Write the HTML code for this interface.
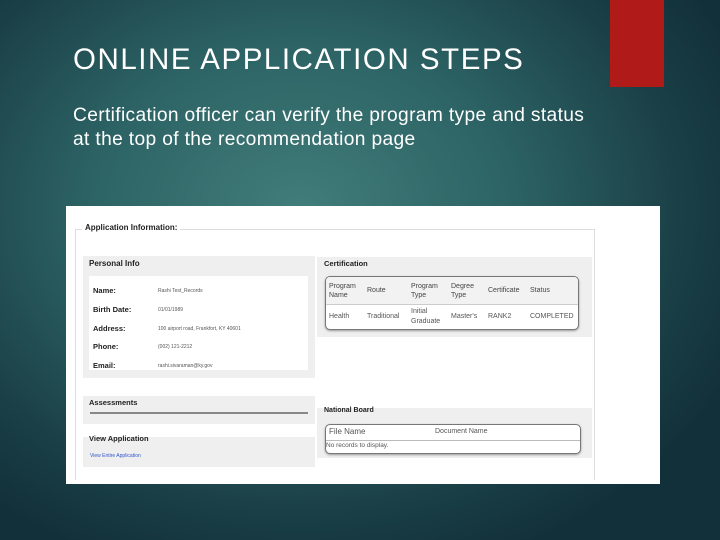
<!DOCTYPE html>
<html><head><style>
body{margin:0;width:720px;height:540px;overflow:hidden;position:relative;font-family:"Liberation Sans",sans-serif;
background:radial-gradient(ellipse 480px 380px at 300px 210px,#417d7a 0%,#2c6264 45%,#1a3f46 80%,#12303a 100%);}
.red{position:absolute;left:610px;top:0;width:54px;height:87px;background:#b01a19;}
h1{position:absolute;left:73px;top:43px;margin:0;font-weight:normal;font-size:29.5px;letter-spacing:1.55px;color:#fff;white-space:nowrap}
.sub{position:absolute;left:73px;top:104px;font-size:19.2px;letter-spacing:0.35px;line-height:24px;color:#fff;white-space:nowrap}
.shot{position:absolute;left:66px;top:206px;width:594px;height:278px;background:#fff;font-size:7px;color:#333}
.a{position:absolute}
.fs{border:1px solid #ddd;}
.p{background:#efefef}
b{font-weight:bold;color:#222}
.tb{background:#fff;border:1px solid #777;border-radius:5px;box-shadow:0 1px 2px #999}
</style></head><body>
<div class="red"></div>
<h1>ONLINE APPLICATION STEPS</h1>
<div class="sub">Certification officer can verify the program type and status<br>at the top of the recommendation page</div>
<div class="shot">
 <div class="a fs" style="left:9px;top:23px;width:518px;height:250px;border-bottom:none"></div>
 <div class="a" style="left:16px;top:17px;background:#fff;padding:0 3px;font-size:8px"><b>Application Information:</b></div>
 <div class="a p" style="left:17px;top:50px;width:232px;height:122px"></div>
 <div class="a" style="left:23px;top:53px;font-size:8px"><b>Personal Info</b></div>
 <div class="a" style="left:23px;top:70px;width:219px;height:94px;background:#fff"></div>
 <div class="a" style="left:27px;top:76px;line-height:18.8px;font-size:7.5px"><b>Name:<br>Birth Date:<br>Address:<br>Phone:<br>Email:</b></div>
 <div class="a" style="left:92px;top:76px;line-height:18.8px;font-size:5px;color:#555">Rashi Test_Records<br>01/01/1989<br>100 airport road, Frankfort, KY 40601<br>(002) 121-2212<br>rashi.sivaraman@ky.gov</div>
 <div class="a p" style="left:251px;top:51px;width:275px;height:80px"></div>
 <div class="a" style="left:258px;top:53px;font-size:7.5px"><b>Certification</b></div>
 <div class="a tb" style="left:259px;top:70px;width:252px;height:52px;overflow:hidden">
  <div style="height:27px;background:#f2f2f2;border-bottom:1px solid #ccc"></div>
 </div>
 <div class="a" style="left:263px;top:76px;font-size:7px;line-height:9px;color:#444">Program<br>Name</div>
 <div class="a" style="left:301px;top:81px;font-size:7px;color:#444">Route</div>
 <div class="a" style="left:345px;top:76px;font-size:7px;line-height:9px;color:#444">Program<br>Type</div>
 <div class="a" style="left:385px;top:76px;font-size:7px;line-height:9px;color:#444">Degree<br>Type</div>
 <div class="a" style="left:422px;top:81px;font-size:7px;color:#444">Certificate</div>
 <div class="a" style="left:464px;top:81px;font-size:7px;color:#444">Status</div>
 <div class="a" style="left:263px;top:107px;font-size:7px;color:#555">Health</div>
 <div class="a" style="left:301px;top:107px;font-size:7px;color:#555">Traditional</div>
 <div class="a" style="left:345px;top:101px;font-size:7px;line-height:10px;color:#555">Initial<br>Graduate</div>
 <div class="a" style="left:385px;top:107px;font-size:7px;color:#555">Master's</div>
 <div class="a" style="left:422px;top:107px;font-size:7px;color:#555">RANK2</div>
 <div class="a" style="left:464px;top:107px;font-size:7px;color:#555">COMPLETED</div>
 <div class="a p" style="left:17px;top:190px;width:232px;height:28px"></div>
 <div class="a" style="left:23px;top:192px;font-size:7.5px"><b>Assessments</b></div>
 <div class="a" style="left:24px;top:206px;width:218px;height:2px;background:#888"></div>
 <div class="a p" style="left:17px;top:231px;width:232px;height:30px"></div>
 <div class="a" style="left:23px;top:228px;font-size:7.5px"><b>View Application</b></div>
 <div class="a" style="left:24px;top:247px;font-size:5px;color:#3355cc">View Entire Application</div>
 <div class="a p" style="left:251px;top:202px;width:275px;height:50px"></div>
 <div class="a" style="left:258px;top:201px;font-size:7px"><b>National Board</b></div>
 <div class="a tb" style="left:259px;top:218px;width:254px;height:28px;overflow:hidden"><div style="height:15px;border-bottom:1px solid #bbb"></div></div>
 <div class="a" style="left:263px;top:221px;font-size:8px;color:#555">File Name</div>
 <div class="a" style="left:369px;top:222px;font-size:7px;color:#555">Document Name</div>
 <div class="a" style="left:260px;top:236px;font-size:6.5px;color:#555">No records to display.</div>
</div>
</body></html>
